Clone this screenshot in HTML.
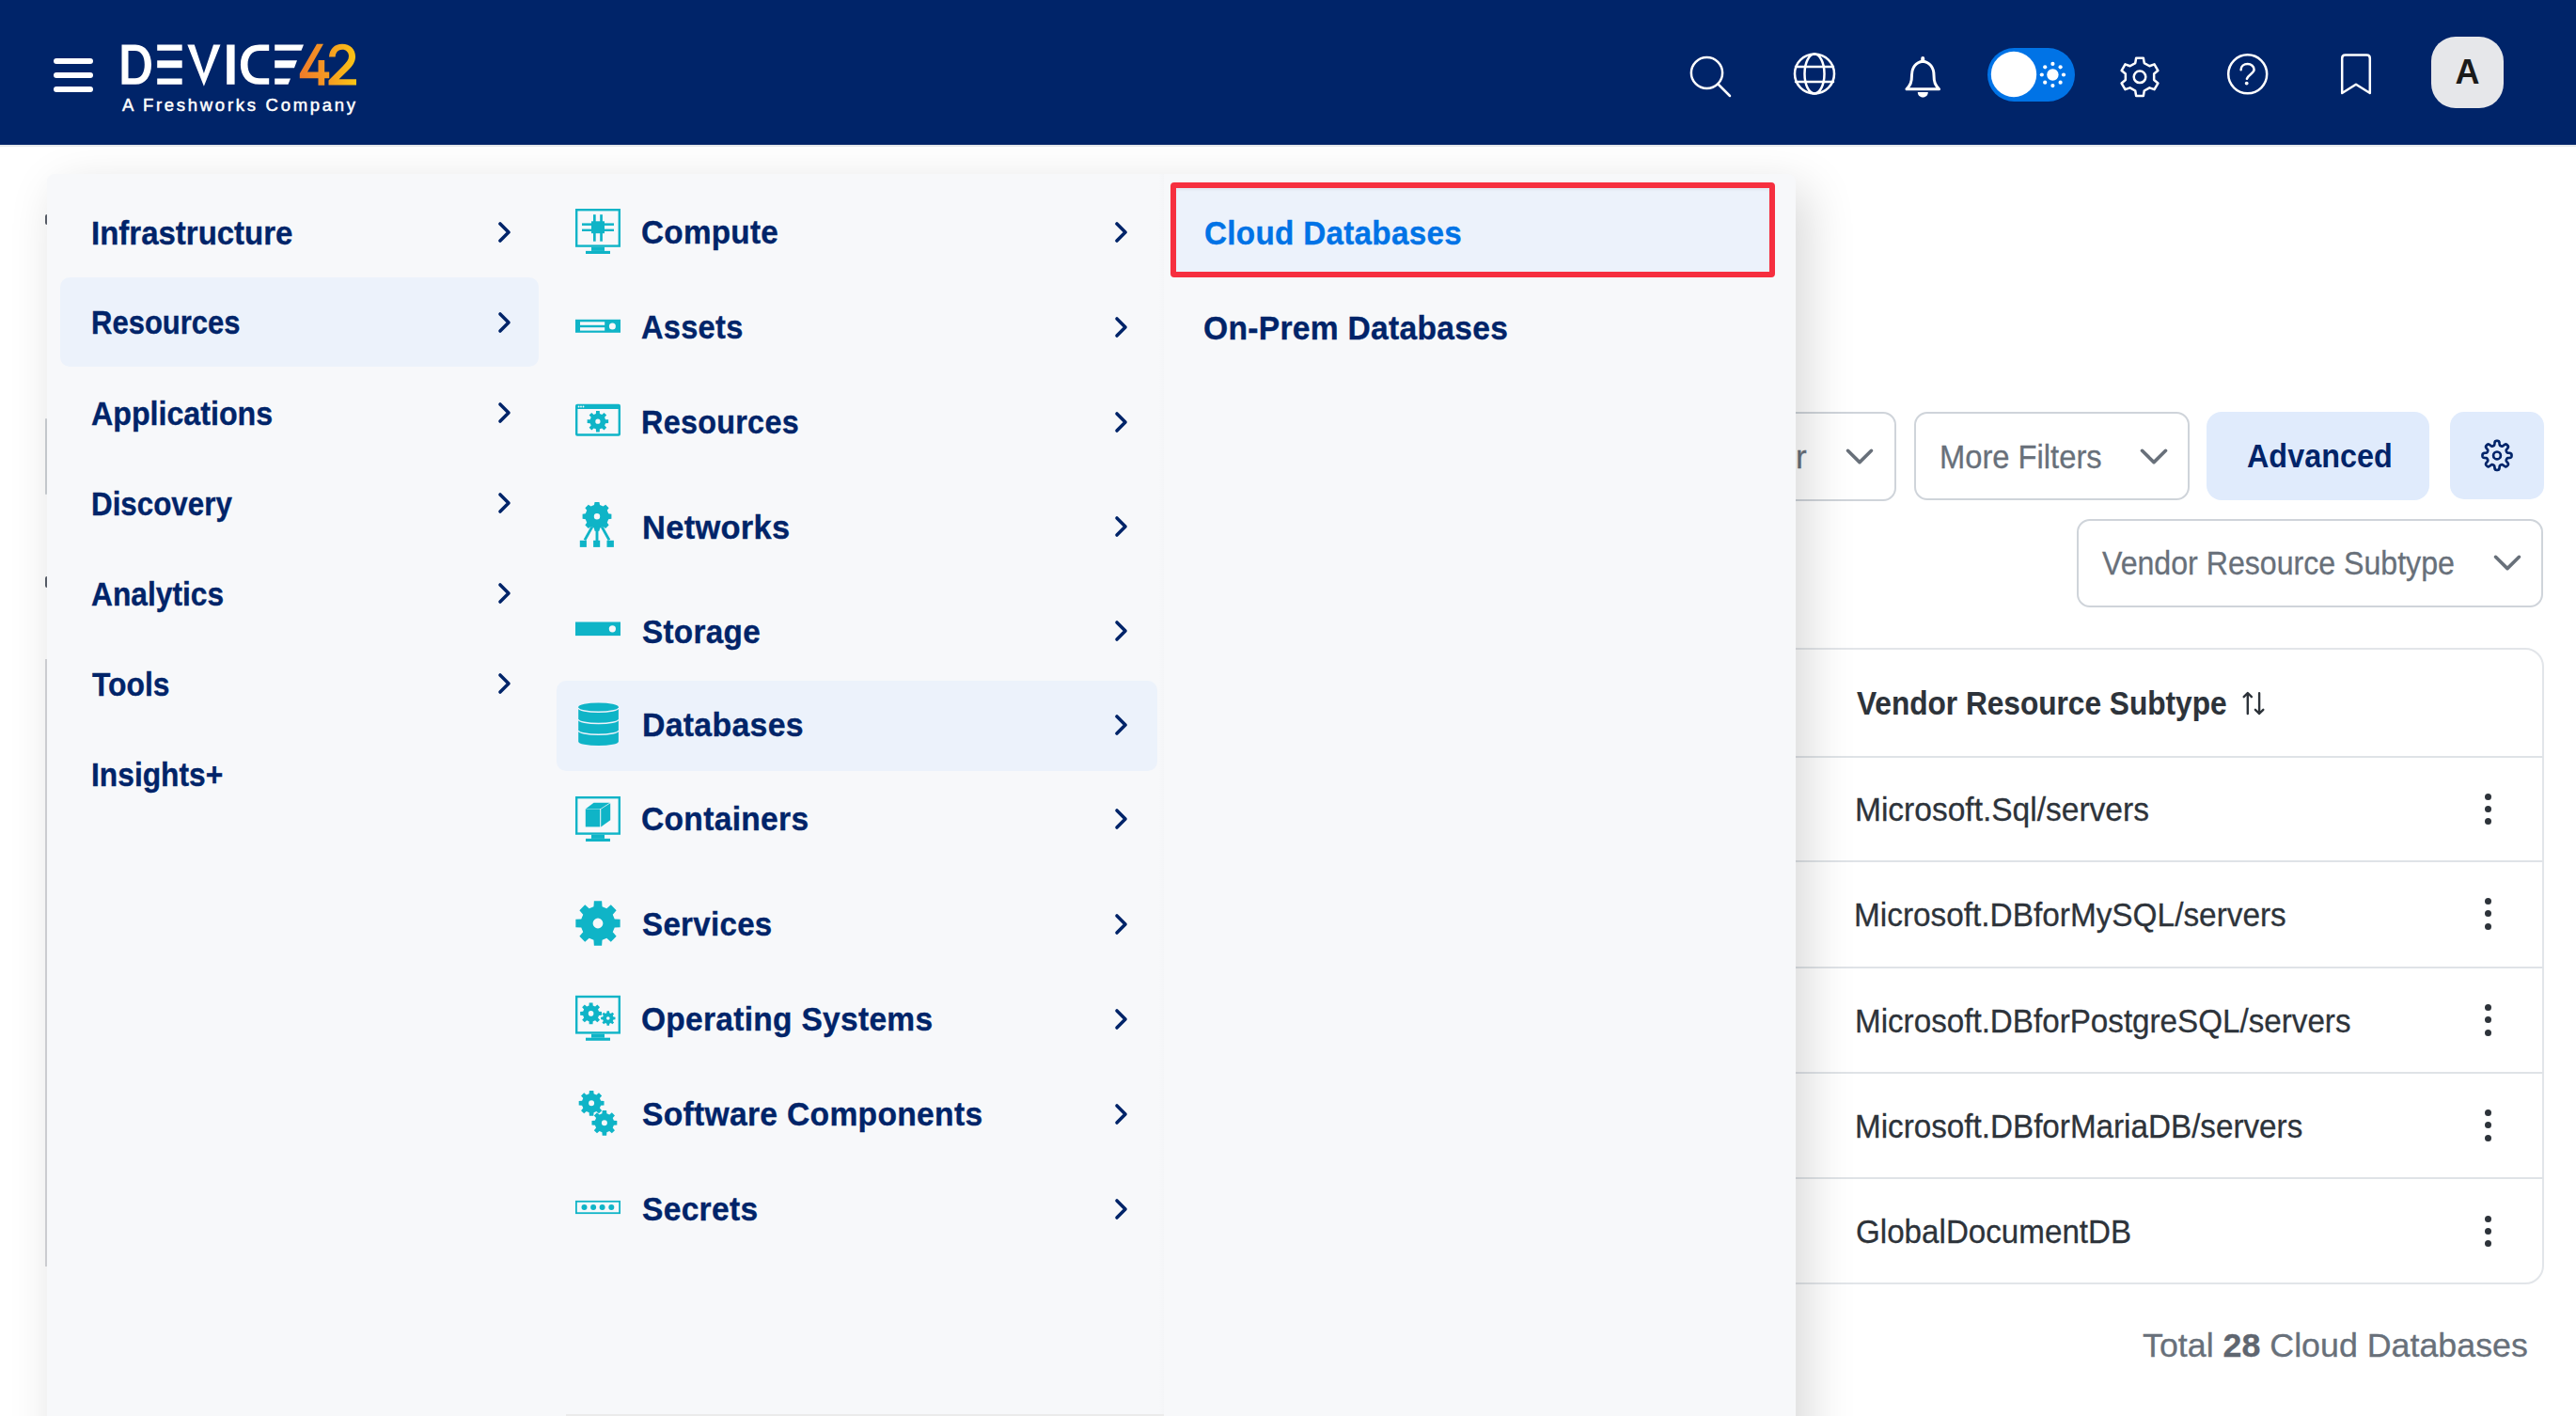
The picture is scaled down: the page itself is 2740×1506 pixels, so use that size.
<!DOCTYPE html>
<html><head><meta charset="utf-8">
<style>
*{box-sizing:border-box;margin:0;padding:0}
html,body{width:2740px;height:1506px;overflow:hidden;background:#fff;font-family:"Liberation Sans",sans-serif}
body{position:relative}
.abs{position:absolute}
.ico{position:absolute;overflow:visible}
#hdr{position:absolute;left:0;top:0;width:2740px;height:154px;background:#002469}
#hdrline{position:absolute;left:0;top:154px;width:2740px;height:2px;background:#e4e7eb}
.dd{position:absolute;border:2px solid #cfd4da;border-radius:14px;background:#fff;color:#68707a;font-size:32px}
.dd .t{position:absolute;white-space:nowrap}
.btn{position:absolute;background:#e0ebfc;border-radius:16px}
#tbl{position:absolute;left:1700px;top:689px;width:1006px;height:677px;border:2px solid #e2e5e9;border-radius:20px;background:#fff}
#panel{position:absolute;left:50px;top:185px;width:1860px;height:1400px;background:#f7f8fa;border-radius:8px;box-shadow:12px 16px 52px rgba(0,0,0,0.155)}
.m1{position:absolute;font-weight:bold;font-size:35px;color:#002469;white-space:nowrap;-webkit-text-stroke:0.35px #002469}
.m2{position:absolute;font-weight:bold;font-size:35px;color:#002469;white-space:nowrap;-webkit-text-stroke:0.35px currentColor}
.hl{position:absolute;background:#ecf2fb;border-radius:10px}
.rt{position:absolute;font-size:35px;white-space:nowrap;-webkit-text-stroke:0.3px currentColor}

</style></head><body>
<div id="hdr"></div><div id="hdrline"></div>
<div class="abs" style="left:57px;top:62px;width:42px;height:6px;border-radius:3px;background:#fff"></div>
<div class="abs" style="left:57px;top:77px;width:42px;height:6px;border-radius:3px;background:#fff"></div>
<div class="abs" style="left:57px;top:92px;width:42px;height:6px;border-radius:3px;background:#fff"></div>
<svg class="ico" style="left:0;top:0;width:400px;height:154px" viewBox="0 0 400 154"><path d="M129.5 47.5 H144 C155 47.5 161 57 161 68.7 C161 80.5 155 89.8 144 89.8 H129.5 Z M136.5 54 V83.3 H143.5 C150.5 83.3 153.8 77 153.8 68.7 C153.8 60.3 150.5 54 143.5 54 Z" fill="#ffffff" fill-rule="evenodd"/><rect x="167.2" y="47.5" width="26.5" height="6.3" fill="#ffffff"/><rect x="167.2" y="64.3" width="26.5" height="7.9" fill="#ffffff"/><rect x="167.2" y="83.5" width="26.5" height="6.3" fill="#ffffff"/><path d="M199.3 47.5 H206.8 L216.9 78 L227 47.5 H234.5 L216.9 91.8 Z" fill="#ffffff"/><rect x="241.2" y="47.5" width="8.4" height="42.3" fill="#ffffff"/><path d="M286.2 47.5 V54 C284 54 281 54 276 54 C268 54 263.5 60 263.5 68.7 C263.5 77.4 268 83.3 276 83.3 C281 83.3 284 83.3 286.2 83.3 V89.8 C284 89.8 281 89.8 276 89.8 C263 89.8 255.9 81 255.9 68.7 C255.9 56.3 263 47.5 276 47.5 C281 47.5 284 47.5 286.2 47.5 Z" fill="#ffffff"/><path d="M292.2 47.5 H323 L320.5 53.8 H292.2 Z M292.2 64.3 H316 L313 72.2 H292.2 Z M292.2 83.5 H309 L306.5 89.8 H292.2 Z" fill="#ffffff"/><defs><linearGradient id="g42" x1="318" y1="0" x2="379" y2="0" gradientUnits="userSpaceOnUse"><stop offset="0" stop-color="#f07a2a"/><stop offset="0.5" stop-color="#f59a22"/><stop offset="1" stop-color="#fbc514"/></linearGradient></defs><path d="M337 46.8 H344 L327 76.4 H338.5 V64 H345.2 V76.4 H350.2 V83.3 H345.2 V90.8 H338.5 V83.3 H318.8 V78.2 Z" fill="url(#g42)"/><path d="M350 60.5 C350.5 52 356 46.8 364 46.8 C372.5 46.8 378 52.3 378 60 C378 66 375 70 370 75 L360.5 84.2 H379 V90.4 H349.5 V85.5 L364.5 70.5 C368.5 66.5 371 63.5 371 59.8 C371 55.5 368 52.8 364 52.8 C359.8 52.8 357 55.8 356.7 60.5 Z" fill="url(#g42)"/></svg>
<div id="t_fw" class="abs" style="left:130px;top:98.5px;font-size:18.5px;font-weight:normal;-webkit-text-stroke:0.5px #fff;letter-spacing:2.72px;color:#fff;line-height:26px;white-space:nowrap">A Freshworks Company</div>
<svg class="ico" style="left:0;top:0;width:2740px;height:154px" viewBox="0 0 2740 154"><circle cx="1815.5" cy="77.5" r="16.6" fill="none" stroke="#fff" stroke-width="2.5" stroke-linecap="round" stroke-linejoin="round"/><path d="M1827.5 89.5 L1840 102" fill="none" stroke="#fff" stroke-width="2.5" stroke-linecap="round" stroke-linejoin="round"/><circle cx="1930" cy="78.5" r="21" fill="none" stroke="#fff" stroke-width="2.5" stroke-linecap="round" stroke-linejoin="round"/><ellipse cx="1930" cy="78.5" rx="10.5" ry="21" fill="none" stroke="#fff" stroke-width="2.5" stroke-linecap="round" stroke-linejoin="round"/><path d="M1910 71 H1950 M1910 87 H1950" fill="none" stroke="#fff" stroke-width="2.5" stroke-linecap="round" stroke-linejoin="round"/><path d="M2045.2 65.2 C2037.8 66 2033.5 72 2033.5 80 C2033.5 87.5 2032 90.5 2028 94.8 H2062.5 C2058.5 90.5 2057 87.5 2057 80 C2057 72 2052.7 66 2045.2 65.2 Z" fill="none" stroke="#fff" stroke-width="3" stroke-linejoin="round"/><rect x="2043.2" y="60" width="4" height="6" rx="2" fill="#fff"/><path d="M2039.8 98 H2050.8 C2050.8 101.2 2048.5 103.5 2045.3 103.5 C2042.1 103.5 2039.8 101.2 2039.8 98 Z" fill="#fff"/><rect x="2114" y="51" width="93" height="57" rx="28.5" fill="#0073e6"/><circle cx="2142" cy="79" r="24.2" fill="#fff"/><circle cx="2183.4" cy="79.5" r="6.2" fill="#fff"/><circle cx="2195.00" cy="79.50" r="2.1" fill="#fff"/><circle cx="2191.60" cy="87.70" r="2.1" fill="#fff"/><circle cx="2183.40" cy="91.10" r="2.1" fill="#fff"/><circle cx="2175.20" cy="87.70" r="2.1" fill="#fff"/><circle cx="2171.80" cy="79.50" r="2.1" fill="#fff"/><circle cx="2175.20" cy="71.30" r="2.1" fill="#fff"/><circle cx="2183.40" cy="67.90" r="2.1" fill="#fff"/><circle cx="2191.60" cy="71.30" r="2.1" fill="#fff"/><path d="M2271.21 67.06 L2272.16 61.66 L2279.84 61.66 L2280.79 67.06 L2286.37 70.28 L2291.52 68.40 L2295.36 75.06 L2291.16 78.58 L2291.16 85.02 L2295.36 88.54 L2291.52 95.20 L2286.37 93.32 L2280.79 96.54 L2279.84 101.94 L2272.16 101.94 L2271.21 96.54 L2265.63 93.32 L2260.48 95.20 L2256.64 88.54 L2260.84 85.02 L2260.84 78.58 L2256.64 75.06 L2260.48 68.40 L2265.63 70.28 Z" fill="none" stroke="#fff" stroke-width="2.5" stroke-linecap="round" stroke-linejoin="round"/><circle cx="2276" cy="81.8" r="6.3" fill="none" stroke="#fff" stroke-width="2.5" stroke-linecap="round" stroke-linejoin="round"/><circle cx="2390.7" cy="78.8" r="20.5" fill="none" stroke="#fff" stroke-width="2.5" stroke-linecap="round" stroke-linejoin="round"/><path d="M2383.6 74.2 C2383.6 70.3 2386.8 68 2390.6 68 C2394.5 68 2397.6 70.6 2397.6 74 C2397.6 78 2391.2 79.4 2389.9 83.8" fill="none" stroke="#fff" stroke-width="2.5" stroke-linecap="round" stroke-linejoin="round"/><circle cx="2389.7" cy="88.6" r="1.9" fill="#fff"/><path d="M2491.2 62 Q2491.2 58.6 2494.6 58.6 H2517.4 Q2520.8 58.6 2520.8 62 V99 L2506 89.8 L2491.2 99 Z" fill="none" stroke="#fff" stroke-width="2.5" stroke-linecap="round" stroke-linejoin="round"/></svg>
<div class="abs" style="left:2586px;top:39px;width:77px;height:76px;border-radius:26px;background:#e6e7ea"></div>
<div class="abs" style="left:2586px;top:39px;width:77px;height:76px;text-align:center;line-height:76px;font-size:36px;font-weight:bold;color:#1b1b1b;letter-spacing:0">A</div>
<div class="abs" style="left:48px;top:445px;width:2px;height:81px;background:#cdd1d6;border-radius:1px"></div>
<div class="abs" style="left:47.5px;top:613px;width:2.5px;height:12px;border-radius:2px 0 0 2px;background:#5a606a"></div>
<div class="abs" style="left:48px;top:701px;width:2px;height:646px;background:#d5d7db"></div>
<div class="abs" style="left:47.5px;top:228px;width:2.5px;height:11px;border-radius:2px 0 0 2px;background:#5a606a"></div>
<div class="dd" style="left:1700px;top:438px;width:317px;height:95px"></div>
<div id="t_r_r" class="rt" style="left:1910.00px;top:466.17px;line-height:40px;letter-spacing:0.000px;transform:scaleX(1.0000);transform-origin:0 0;color:#68707a">r</div>
<svg class="ico" style="left:1960px;top:472px;width:36px;height:28px" viewBox="0 0 36 28"><path d="M5.5 7.3 L18 19.6 L30.5 7.3" fill="none" stroke="#68707a" stroke-width="3.6" stroke-linecap="round" stroke-linejoin="round"/></svg>
<div class="dd" style="left:2035.5px;top:438px;width:293px;height:93.5px"></div>
<div id="t_r_mf" class="rt" style="left:2062.89px;top:466.07px;line-height:40px;letter-spacing:0.000px;transform:scaleX(0.9344);transform-origin:0 0;color:#68707a">More Filters</div>
<svg class="ico" style="left:2273px;top:472px;width:36px;height:28px" viewBox="0 0 36 28"><path d="M5.5 7.3 L18 19.6 L30.5 7.3" fill="none" stroke="#68707a" stroke-width="3.6" stroke-linecap="round" stroke-linejoin="round"/></svg>
<div class="btn" style="left:2347px;top:438px;width:237px;height:94px"></div>
<div id="t_r_adv" class="rt" style="left:2390.26px;top:465.20px;line-height:40px;letter-spacing:0.000px;transform:scaleX(0.9246);transform-origin:0 0;font-weight:bold;color:#002469;-webkit-text-stroke:0">Advanced</div>
<div class="btn" style="left:2606px;top:438px;width:100px;height:93px;border-radius:15px"></div>
<svg class="ico" style="left:2600px;top:430px;width:110px;height:110px" viewBox="2600 430 110 110"><path d="M2671.50 484.40 L2671.49 484.81 L2671.45 485.21 L2671.38 485.61 L2671.24 486.00 L2670.96 486.37 L2670.41 486.68 L2669.50 486.90 L2668.39 487.03 L2667.48 487.16 L2666.93 487.33 L2666.62 487.55 L2666.44 487.79 L2666.30 488.05 L2666.18 488.31 L2666.07 488.57 L2665.96 488.84 L2665.86 489.10 L2665.78 489.38 L2665.74 489.69 L2665.80 490.06 L2666.07 490.57 L2666.62 491.30 L2667.32 492.18 L2667.81 492.98 L2667.97 493.58 L2667.91 494.04 L2667.73 494.42 L2667.50 494.75 L2667.24 495.07 L2666.96 495.36 L2666.67 495.64 L2666.35 495.90 L2666.02 496.13 L2665.64 496.31 L2665.18 496.37 L2664.58 496.21 L2663.78 495.72 L2662.90 495.02 L2662.17 494.47 L2661.66 494.20 L2661.29 494.14 L2660.98 494.18 L2660.70 494.26 L2660.44 494.36 L2660.17 494.47 L2659.91 494.58 L2659.65 494.70 L2659.39 494.84 L2659.15 495.02 L2658.93 495.33 L2658.76 495.88 L2658.63 496.79 L2658.50 497.90 L2658.28 498.81 L2657.97 499.36 L2657.60 499.64 L2657.21 499.78 L2656.81 499.85 L2656.41 499.89 L2656.00 499.90 L2655.59 499.89 L2655.19 499.85 L2654.79 499.78 L2654.40 499.64 L2654.03 499.36 L2653.72 498.81 L2653.50 497.90 L2653.37 496.79 L2653.24 495.88 L2653.07 495.33 L2652.85 495.02 L2652.61 494.84 L2652.35 494.70 L2652.09 494.58 L2651.83 494.47 L2651.56 494.36 L2651.30 494.26 L2651.02 494.18 L2650.71 494.14 L2650.34 494.20 L2649.83 494.47 L2649.10 495.02 L2648.22 495.72 L2647.42 496.21 L2646.82 496.37 L2646.36 496.31 L2645.98 496.13 L2645.65 495.90 L2645.33 495.64 L2645.04 495.36 L2644.76 495.07 L2644.50 494.75 L2644.27 494.42 L2644.09 494.04 L2644.03 493.58 L2644.19 492.98 L2644.68 492.18 L2645.38 491.30 L2645.93 490.57 L2646.20 490.06 L2646.26 489.69 L2646.22 489.38 L2646.14 489.10 L2646.04 488.84 L2645.93 488.57 L2645.82 488.31 L2645.70 488.05 L2645.56 487.79 L2645.38 487.55 L2645.07 487.33 L2644.52 487.16 L2643.61 487.03 L2642.50 486.90 L2641.59 486.68 L2641.04 486.37 L2640.76 486.00 L2640.62 485.61 L2640.55 485.21 L2640.51 484.81 L2640.50 484.40 L2640.51 483.99 L2640.55 483.59 L2640.62 483.19 L2640.76 482.80 L2641.04 482.43 L2641.59 482.12 L2642.50 481.90 L2643.61 481.77 L2644.52 481.64 L2645.07 481.47 L2645.38 481.25 L2645.56 481.01 L2645.70 480.75 L2645.82 480.49 L2645.93 480.23 L2646.04 479.96 L2646.14 479.70 L2646.22 479.42 L2646.26 479.11 L2646.20 478.74 L2645.93 478.23 L2645.38 477.50 L2644.68 476.62 L2644.19 475.82 L2644.03 475.22 L2644.09 474.76 L2644.27 474.38 L2644.50 474.05 L2644.76 473.73 L2645.04 473.44 L2645.33 473.16 L2645.65 472.90 L2645.98 472.67 L2646.36 472.49 L2646.82 472.43 L2647.42 472.59 L2648.22 473.08 L2649.10 473.78 L2649.83 474.33 L2650.34 474.60 L2650.71 474.66 L2651.02 474.62 L2651.30 474.54 L2651.56 474.44 L2651.83 474.33 L2652.09 474.22 L2652.35 474.10 L2652.61 473.96 L2652.85 473.78 L2653.07 473.47 L2653.24 472.92 L2653.37 472.01 L2653.50 470.90 L2653.72 469.99 L2654.03 469.44 L2654.40 469.16 L2654.79 469.02 L2655.19 468.95 L2655.59 468.91 L2656.00 468.90 L2656.41 468.91 L2656.81 468.95 L2657.21 469.02 L2657.60 469.16 L2657.97 469.44 L2658.28 469.99 L2658.50 470.90 L2658.63 472.01 L2658.76 472.92 L2658.93 473.47 L2659.15 473.78 L2659.39 473.96 L2659.65 474.10 L2659.91 474.22 L2660.17 474.33 L2660.44 474.44 L2660.70 474.54 L2660.98 474.62 L2661.29 474.66 L2661.66 474.60 L2662.17 474.33 L2662.90 473.78 L2663.78 473.08 L2664.58 472.59 L2665.18 472.43 L2665.64 472.49 L2666.02 472.67 L2666.35 472.90 L2666.67 473.16 L2666.96 473.44 L2667.24 473.73 L2667.50 474.05 L2667.73 474.38 L2667.91 474.76 L2667.97 475.22 L2667.81 475.82 L2667.32 476.62 L2666.62 477.50 L2666.07 478.23 L2665.80 478.74 L2665.74 479.11 L2665.78 479.42 L2665.86 479.70 L2665.96 479.96 L2666.07 480.23 L2666.18 480.49 L2666.30 480.75 L2666.44 481.01 L2666.62 481.25 L2666.93 481.47 L2667.48 481.64 L2668.39 481.77 L2669.50 481.90 L2670.41 482.12 L2670.96 482.43 L2671.24 482.80 L2671.38 483.19 L2671.45 483.59 L2671.49 483.99 Z" fill="none" stroke="#002469" stroke-width="2.7" stroke-linejoin="round"/><circle cx="2656" cy="484.4" r="3.9" fill="none" stroke="#002469" stroke-width="2.7"/></svg>
<div class="dd" style="left:2208.5px;top:551.5px;width:496px;height:94px"></div>
<div id="t_r_vrs" class="rt" style="left:2236.25px;top:579.31px;line-height:40px;letter-spacing:0.000px;transform:scaleX(0.9175);transform-origin:0 0;color:#68707a">Vendor Resource Subtype</div>
<svg class="ico" style="left:2649px;top:585px;width:36px;height:28px" viewBox="0 0 36 28"><path d="M5.5 7.3 L18 19.6 L30.5 7.3" fill="none" stroke="#68707a" stroke-width="3.6" stroke-linecap="round" stroke-linejoin="round"/></svg>
<div id="tbl"></div>
<div class="abs" style="left:1700px;top:804px;width:1005px;height:2px;background:#dfe3e7"></div>
<div class="abs" style="left:1700px;top:915px;width:1005px;height:2px;background:#dfe3e7"></div>
<div class="abs" style="left:1700px;top:1027.5px;width:1005px;height:2px;background:#dfe3e7"></div>
<div class="abs" style="left:1700px;top:1140px;width:1005px;height:2px;background:#dfe3e7"></div>
<div class="abs" style="left:1700px;top:1252px;width:1005px;height:2px;background:#dfe3e7"></div>
<div id="t_r_hdr" class="rt" style="left:1974.74px;top:728.06px;line-height:40px;letter-spacing:0.000px;transform:scaleX(0.9033);transform-origin:0 0;font-weight:bold;color:#2d333a;-webkit-text-stroke:0.15px #2d333a">Vendor Resource Subtype</div>
<svg class="ico" style="left:2370px;top:720px;width:50px;height:55px" viewBox="2370 720 50 55"><path d="M2390.8 759 V737.2 M2386.7 741.2 L2390.8 737 L2394.9 741.2 M2403.1 737.2 V759 M2398.9 754.8 L2403.1 759 L2407.3 754.8" fill="none" stroke="#2d333a" stroke-width="2.4" stroke-linecap="round" stroke-linejoin="round"/></svg>
<div id="t_r_c0" class="rt" style="left:1973.42px;top:841.06px;line-height:40px;letter-spacing:0.000px;transform:scaleX(0.9576);transform-origin:0 0;color:#2d333a">Microsoft.Sql/servers</div>
<div class="abs" style="left:2643.3px;top:843.5px;width:7px;height:7px;border-radius:50%;background:#2d333a"></div>
<div class="abs" style="left:2643.3px;top:856.9px;width:7px;height:7px;border-radius:50%;background:#2d333a"></div>
<div class="abs" style="left:2643.3px;top:870.3px;width:7px;height:7px;border-radius:50%;background:#2d333a"></div>
<div id="t_r_c1" class="rt" style="left:1972.48px;top:952.56px;line-height:40px;letter-spacing:0.000px;transform:scaleX(0.9533);transform-origin:0 0;color:#2d333a">Microsoft.DBforMySQL/servers</div>
<div class="abs" style="left:2643.3px;top:955px;width:7px;height:7px;border-radius:50%;background:#2d333a"></div>
<div class="abs" style="left:2643.3px;top:968.4px;width:7px;height:7px;border-radius:50%;background:#2d333a"></div>
<div class="abs" style="left:2643.3px;top:981.8px;width:7px;height:7px;border-radius:50%;background:#2d333a"></div>
<div id="t_r_c2" class="rt" style="left:1972.58px;top:1065.56px;line-height:40px;letter-spacing:0.000px;transform:scaleX(0.9483);transform-origin:0 0;color:#2d333a">Microsoft.DBforPostgreSQL/servers</div>
<div class="abs" style="left:2643.3px;top:1068px;width:7px;height:7px;border-radius:50%;background:#2d333a"></div>
<div class="abs" style="left:2643.3px;top:1081.4px;width:7px;height:7px;border-radius:50%;background:#2d333a"></div>
<div class="abs" style="left:2643.3px;top:1094.8px;width:7px;height:7px;border-radius:50%;background:#2d333a"></div>
<div id="t_r_c3" class="rt" style="left:1972.58px;top:1177.74px;line-height:40px;letter-spacing:0.000px;transform:scaleX(0.9492);transform-origin:0 0;color:#2d333a">Microsoft.DBforMariaDB/servers</div>
<div class="abs" style="left:2643.3px;top:1180px;width:7px;height:7px;border-radius:50%;background:#2d333a"></div>
<div class="abs" style="left:2643.3px;top:1193.4px;width:7px;height:7px;border-radius:50%;background:#2d333a"></div>
<div class="abs" style="left:2643.3px;top:1206.8px;width:7px;height:7px;border-radius:50%;background:#2d333a"></div>
<div id="t_r_c4" class="rt" style="left:1974.46px;top:1290.24px;line-height:40px;letter-spacing:0.000px;transform:scaleX(0.9477);transform-origin:0 0;color:#2d333a">GlobalDocumentDB</div>
<div class="abs" style="left:2643.3px;top:1292.5px;width:7px;height:7px;border-radius:50%;background:#2d333a"></div>
<div class="abs" style="left:2643.3px;top:1305.9px;width:7px;height:7px;border-radius:50%;background:#2d333a"></div>
<div class="abs" style="left:2643.3px;top:1319.3px;width:7px;height:7px;border-radius:50%;background:#2d333a"></div>
<div id="t_r_tot" class="rt" style="left:2279.01px;top:1410.58px;line-height:40px;letter-spacing:0.000px;transform:scaleX(1.0225);transform-origin:0 0;color:#68707a">Total <b style="color:#5f6670">28</b> Cloud Databases</div>
<div id="panel"></div>
<div class="abs" style="left:1232px;top:185px;width:6px;height:1321px;background:linear-gradient(90deg,rgba(0,0,0,0),rgba(0,0,0,0.012))"></div>
<div class="abs" style="left:602px;top:1504px;width:636px;height:2px;background:#ebebeb"></div>
<div class="hl" style="left:64px;top:295px;width:509px;height:95px"></div>
<div class="hl" style="left:592px;top:724px;width:639px;height:96px"></div>
<div id="t_c1_0" class="m1" style="left:96.60px;top:228.19px;line-height:40px;letter-spacing:0.000px;transform:scaleX(0.9423);transform-origin:0 0;">Infrastructure</div>
<svg class="ico" style="left:528px;top:233.5px;width:20px;height:30px" viewBox="0 0 20 30"><path d="M4 4 L13 13 L4 22" fill="none" stroke="#002469" stroke-width="3.6" stroke-linecap="round" stroke-linejoin="round"/></svg>
<div id="t_c1_1" class="m1" style="left:97.27px;top:323.18px;line-height:40px;letter-spacing:0.000px;transform:scaleX(0.8862);transform-origin:0 0;">Resources</div>
<svg class="ico" style="left:528px;top:329.5px;width:20px;height:30px" viewBox="0 0 20 30"><path d="M4 4 L13 13 L4 22" fill="none" stroke="#002469" stroke-width="3.6" stroke-linecap="round" stroke-linejoin="round"/></svg>
<div id="t_c1_2" class="m1" style="left:97.16px;top:419.85px;line-height:40px;letter-spacing:0.000px;transform:scaleX(0.9197);transform-origin:0 0;">Applications</div>
<svg class="ico" style="left:528px;top:425.5px;width:20px;height:30px" viewBox="0 0 20 30"><path d="M4 4 L13 13 L4 22" fill="none" stroke="#002469" stroke-width="3.6" stroke-linecap="round" stroke-linejoin="round"/></svg>
<div id="t_c1_3" class="m1" style="left:97.15px;top:515.85px;line-height:40px;letter-spacing:0.000px;transform:scaleX(0.8957);transform-origin:0 0;">Discovery</div>
<svg class="ico" style="left:528px;top:521.5px;width:20px;height:30px" viewBox="0 0 20 30"><path d="M4 4 L13 13 L4 22" fill="none" stroke="#002469" stroke-width="3.6" stroke-linecap="round" stroke-linejoin="round"/></svg>
<div id="t_c1_4" class="m1" style="left:97.21px;top:611.85px;line-height:40px;letter-spacing:0.000px;transform:scaleX(0.9067);transform-origin:0 0;">Analytics</div>
<svg class="ico" style="left:528px;top:617.5px;width:20px;height:30px" viewBox="0 0 20 30"><path d="M4 4 L13 13 L4 22" fill="none" stroke="#002469" stroke-width="3.6" stroke-linecap="round" stroke-linejoin="round"/></svg>
<div id="t_c1_5" class="m1" style="left:98.20px;top:708.19px;line-height:40px;letter-spacing:0.000px;transform:scaleX(0.9097);transform-origin:0 0;">Tools</div>
<svg class="ico" style="left:528px;top:713.5px;width:20px;height:30px" viewBox="0 0 20 30"><path d="M4 4 L13 13 L4 22" fill="none" stroke="#002469" stroke-width="3.6" stroke-linecap="round" stroke-linejoin="round"/></svg>
<div id="t_c1_6" class="m1" style="left:96.87px;top:803.85px;line-height:40px;letter-spacing:0.000px;transform:scaleX(0.9075);transform-origin:0 0;">Insights+</div>
<div id="t_c2_Compute" class="m2" style="left:682.35px;top:227.48px;line-height:40px;letter-spacing:0.300px;transform:scaleX(0.9499);transform-origin:0 0;">Compute</div>
<svg class="ico" style="left:1183.5px;top:234px;width:20px;height:30px" viewBox="0 0 20 30"><path d="M4 4 L13 13 L4 22" fill="none" stroke="#002469" stroke-width="3.6" stroke-linecap="round" stroke-linejoin="round"/></svg>
<div id="t_c2_Assets" class="m2" style="left:682.01px;top:328.19px;line-height:40px;letter-spacing:0.300px;transform:scaleX(0.9310);transform-origin:0 0;">Assets</div>
<svg class="ico" style="left:1183.5px;top:334.5px;width:20px;height:30px" viewBox="0 0 20 30"><path d="M4 4 L13 13 L4 22" fill="none" stroke="#002469" stroke-width="3.6" stroke-linecap="round" stroke-linejoin="round"/></svg>
<div id="t_c2_Resources" class="m2" style="left:682.25px;top:429.19px;line-height:40px;letter-spacing:0.300px;transform:scaleX(0.9243);transform-origin:0 0;">Resources</div>
<svg class="ico" style="left:1183.5px;top:435.5px;width:20px;height:30px" viewBox="0 0 20 30"><path d="M4 4 L13 13 L4 22" fill="none" stroke="#002469" stroke-width="3.6" stroke-linecap="round" stroke-linejoin="round"/></svg>
<div id="t_c2_Networks" class="m2" style="left:682.77px;top:540.69px;line-height:40px;letter-spacing:0.300px;transform:scaleX(0.9844);transform-origin:0 0;">Networks</div>
<svg class="ico" style="left:1183.5px;top:547px;width:20px;height:30px" viewBox="0 0 20 30"><path d="M4 4 L13 13 L4 22" fill="none" stroke="#002469" stroke-width="3.6" stroke-linecap="round" stroke-linejoin="round"/></svg>
<div id="t_c2_Storage" class="m2" style="left:682.97px;top:651.73px;line-height:40px;letter-spacing:0.300px;transform:scaleX(0.9510);transform-origin:0 0;">Storage</div>
<svg class="ico" style="left:1183.5px;top:658.25px;width:20px;height:30px" viewBox="0 0 20 30"><path d="M4 4 L13 13 L4 22" fill="none" stroke="#002469" stroke-width="3.6" stroke-linecap="round" stroke-linejoin="round"/></svg>
<div id="t_c2_Databases" class="m2" style="left:682.91px;top:751.43px;line-height:40px;letter-spacing:0.300px;transform:scaleX(0.9664);transform-origin:0 0;">Databases</div>
<svg class="ico" style="left:1183.5px;top:758.25px;width:20px;height:30px" viewBox="0 0 20 30"><path d="M4 4 L13 13 L4 22" fill="none" stroke="#002469" stroke-width="3.6" stroke-linecap="round" stroke-linejoin="round"/></svg>
<div id="t_c2_Containers" class="m2" style="left:682.27px;top:851.44px;line-height:40px;letter-spacing:0.300px;transform:scaleX(0.9602);transform-origin:0 0;">Containers</div>
<svg class="ico" style="left:1183.5px;top:858.25px;width:20px;height:30px" viewBox="0 0 20 30"><path d="M4 4 L13 13 L4 22" fill="none" stroke="#002469" stroke-width="3.6" stroke-linecap="round" stroke-linejoin="round"/></svg>
<div id="t_c2_Services" class="m2" style="left:683.01px;top:963.19px;line-height:40px;letter-spacing:0.300px;transform:scaleX(0.9464);transform-origin:0 0;">Services</div>
<svg class="ico" style="left:1183.5px;top:969.5px;width:20px;height:30px" viewBox="0 0 20 30"><path d="M4 4 L13 13 L4 22" fill="none" stroke="#002469" stroke-width="3.6" stroke-linecap="round" stroke-linejoin="round"/></svg>
<div id="t_c2_Operating" class="m2" style="left:682.27px;top:1064.23px;line-height:40px;letter-spacing:0.300px;transform:scaleX(0.9576);transform-origin:0 0;">Operating Systems</div>
<svg class="ico" style="left:1183.5px;top:1070.75px;width:20px;height:30px" viewBox="0 0 20 30"><path d="M4 4 L13 13 L4 22" fill="none" stroke="#002469" stroke-width="3.6" stroke-linecap="round" stroke-linejoin="round"/></svg>
<div id="t_c2_Software" class="m2" style="left:682.96px;top:1165.48px;line-height:40px;letter-spacing:0.300px;transform:scaleX(0.9609);transform-origin:0 0;">Software Components</div>
<svg class="ico" style="left:1183.5px;top:1172px;width:20px;height:30px" viewBox="0 0 20 30"><path d="M4 4 L13 13 L4 22" fill="none" stroke="#002469" stroke-width="3.6" stroke-linecap="round" stroke-linejoin="round"/></svg>
<div id="t_c2_Secrets" class="m2" style="left:682.96px;top:1265.94px;line-height:40px;letter-spacing:0.300px;transform:scaleX(0.9592);transform-origin:0 0;">Secrets</div>
<svg class="ico" style="left:1183.5px;top:1272.75px;width:20px;height:30px" viewBox="0 0 20 30"><path d="M4 4 L13 13 L4 22" fill="none" stroke="#002469" stroke-width="3.6" stroke-linecap="round" stroke-linejoin="round"/></svg>
<svg class="ico" style="left:0;top:0;width:1300px;height:1506px" viewBox="0 0 1300 1506"><g transform="translate(612 222)"><rect x="1.2" y="1.2" width="45.6" height="38.4" fill="none" stroke="#0fb4c7" stroke-width="2.4"/><rect x="17" y="40.8" width="14" height="4.1" fill="#0fb4c7"/><rect x="11" y="44.9" width="26" height="3.1" fill="#0fb4c7"/><rect x="17" y="13.3" width="14" height="12.9" fill="#0fb4c7"/><rect x="19" y="6.2" width="2.7" height="28.5" fill="#0fb4c7"/><rect x="26.2" y="6.2" width="2.7" height="28.5" fill="#0fb4c7"/><rect x="7" y="15.4" width="34" height="2.5" fill="#0fb4c7"/><rect x="7" y="21.6" width="34" height="2.4" fill="#0fb4c7"/></g><g transform="translate(612 339.8)"><rect x="0" y="0" width="48" height="14" fill="#0fb4c7"/><rect x="5" y="2.5" width="26.2" height="3.5" fill="#f7f8fa"/><rect x="5" y="8.4" width="26.2" height="3.4" fill="#f7f8fa"/><circle cx="39.4" cy="7.1" r="3.5" fill="#f7f8fa"/></g><g transform="translate(612 429.8)"><path d="M2 0 H46 A2 2 0 0 1 48 2 V32 A2 2 0 0 1 46 34 H2 A2 2 0 0 1 0 32 V2 A2 2 0 0 1 2 0 Z M2.4 5.2 V31.5 H45.6 V5.2 Z" fill="#0fb4c7" fill-rule="evenodd"/><circle cx="3.6" cy="2.7" r="0.9" fill="#f7f8fa"/><circle cx="6" cy="2.7" r="0.9" fill="#f7f8fa"/><circle cx="8.5" cy="2.7" r="0.9" fill="#f7f8fa"/><path d="M21.87 10.25 L22.03 7.15 L25.77 7.15 L25.93 10.25 L28.23 11.20 L30.53 9.12 L33.18 11.77 L31.10 14.07 L32.05 16.37 L35.15 16.53 L35.15 20.27 L32.05 20.43 L31.10 22.73 L33.18 25.03 L30.53 27.68 L28.23 25.60 L25.93 26.55 L25.77 29.65 L22.03 29.65 L21.87 26.55 L19.57 25.60 L17.27 27.68 L14.62 25.03 L16.70 22.73 L15.75 20.43 L12.65 20.27 L12.65 16.53 L15.75 16.37 L16.70 14.07 L14.62 11.77 L17.27 9.12 L19.57 11.20 Z M21.30 18.40 a2.60 2.60 0 1 0 5.20 0 a2.60 2.60 0 1 0 -5.20 0 Z" fill="#0fb4c7" fill-rule="evenodd"/></g><g transform="translate(616.8 533.9)"><path d="M15.16 3.17 L15.76 -0.01 L20.64 -0.01 L21.24 3.17 L24.70 4.61 L27.37 2.78 L30.82 6.23 L28.99 8.90 L30.43 12.36 L33.61 12.96 L33.61 17.84 L30.43 18.44 L28.99 21.90 L30.82 24.57 L27.37 28.02 L24.70 26.19 L21.24 27.63 L20.64 30.81 L15.76 30.81 L15.16 27.63 L11.70 26.19 L9.03 28.02 L5.58 24.57 L7.41 21.90 L5.97 18.44 L2.79 17.84 L2.79 12.96 L5.97 12.36 L7.41 8.90 L5.58 6.23 L9.03 2.78 L11.70 4.61 Z M15.00 15.40 a3.20 3.20 0 1 0 6.40 0 a3.20 3.20 0 1 0 -6.40 0 Z" fill="#0fb4c7" fill-rule="evenodd"/><path d="M13 26.5 L5.2 40.5 M23.4 26.5 L31.2 40.5 M18.2 30 V41" stroke="#0fb4c7" stroke-width="2.9" fill="none"/><path d="M14.4 26.4 H22.2 L18.2 33.2 Z" fill="#0fb4c7"/><rect x="0" y="40.9" width="7.1" height="7.1" fill="#0fb4c7"/><rect x="14.3" y="40.9" width="7.1" height="7.1" fill="#0fb4c7"/><rect x="28.7" y="40.9" width="7.4" height="7.1" fill="#0fb4c7"/></g><g transform="translate(612 661.5)"><rect x="0" y="0" width="48" height="14.6" fill="#0fb4c7"/><circle cx="39.4" cy="7.3" r="3.6" fill="#f7f8fa"/></g><g transform="translate(615.2 747.6)"><path d="M0 4.3 A21.35 4.3 0 0 1 42.7 4.3 V41.1 A21.35 4.3 0 0 1 0 41.1 Z" fill="#0fb4c7"/><path d="M0 5.3 A21.35 4.3 0 0 0 42.7 5.3 M0 17.6 A21.35 4.3 0 0 0 42.7 17.6 M0 29.4 A21.35 4.3 0 0 0 42.7 29.4" fill="none" stroke="#ecf2fb" stroke-width="1.4"/></g><g transform="translate(612 847)"><rect x="1.2" y="1.2" width="45.6" height="38.4" fill="none" stroke="#0fb4c7" stroke-width="2.4"/><rect x="17" y="40.8" width="14" height="4.1" fill="#0fb4c7"/><rect x="11" y="44.9" width="26" height="3.1" fill="#0fb4c7"/><path d="M10.8 13.4 H26.2 V32.4 H10.8 Z" fill="#0fb4c7"/><path d="M11.3 12.9 L19.6 6.8 H36.7 L27 12.9 Z" fill="#0fb4c7"/><path d="M27.2 13.6 L37.2 7.3 V25.2 L27.2 32.4 Z" fill="#0fb4c7"/></g><path d="M631.45 964.27 L631.87 958.36 L640.13 958.36 L640.55 964.27 L645.32 966.25 L649.80 962.36 L655.64 968.20 L651.75 972.68 L653.73 977.45 L659.64 977.87 L659.64 986.13 L653.73 986.55 L651.75 991.32 L655.64 995.80 L649.80 1001.64 L645.32 997.75 L640.55 999.73 L640.13 1005.64 L631.87 1005.64 L631.45 999.73 L626.68 997.75 L622.20 1001.64 L616.36 995.80 L620.25 991.32 L618.27 986.55 L612.36 986.13 L612.36 977.87 L618.27 977.45 L620.25 972.68 L616.36 968.20 L622.20 962.36 L626.68 966.25 Z M630.60 982.00 a5.40 5.40 0 1 0 10.80 0 a5.40 5.40 0 1 0 -10.80 0 Z" fill="#0fb4c7" fill-rule="evenodd"/><g transform="translate(612 1058.8)"><rect x="1.2" y="1.2" width="45.6" height="38.4" fill="none" stroke="#0fb4c7" stroke-width="2.4"/><rect x="17" y="40.8" width="14" height="4.1" fill="#0fb4c7"/><rect x="11" y="44.9" width="26" height="3.1" fill="#0fb4c7"/><path d="M14.50 10.66 L14.70 7.66 L18.50 7.66 L18.70 10.66 L21.09 11.65 L23.34 9.66 L26.04 12.36 L24.05 14.61 L25.04 17.00 L28.04 17.20 L28.04 21.00 L25.04 21.20 L24.05 23.59 L26.04 25.84 L23.34 28.54 L21.09 26.55 L18.70 27.54 L18.50 30.54 L14.70 30.54 L14.50 27.54 L12.11 26.55 L9.86 28.54 L7.16 25.84 L9.15 23.59 L8.16 21.20 L5.16 21.00 L5.16 17.20 L8.16 17.00 L9.15 14.61 L7.16 12.36 L9.86 9.66 L12.11 11.65 Z M13.80 19.10 a2.80 2.80 0 1 0 5.60 0 a2.80 2.80 0 1 0 -5.60 0 Z" fill="#0fb4c7" fill-rule="evenodd"/><path d="M33.40 18.57 L33.52 16.51 L36.08 16.51 L36.20 18.57 L37.79 19.23 L39.34 17.85 L41.15 19.66 L39.77 21.21 L40.43 22.80 L42.49 22.92 L42.49 25.48 L40.43 25.60 L39.77 27.19 L41.15 28.74 L39.34 30.55 L37.79 29.17 L36.20 29.83 L36.08 31.89 L33.52 31.89 L33.40 29.83 L31.81 29.17 L30.26 30.55 L28.45 28.74 L29.83 27.19 L29.17 25.60 L27.11 25.48 L27.11 22.92 L29.17 22.80 L29.83 21.21 L28.45 19.66 L30.26 17.85 L31.81 19.23 Z M33.00 24.20 a1.80 1.80 0 1 0 3.60 0 a1.80 1.80 0 1 0 -3.60 0 Z" fill="#0fb4c7" fill-rule="evenodd"/></g><g transform="translate(612 1160)"><path d="M14.62 3.30 L14.87 -0.12 L19.33 -0.12 L19.58 3.30 L22.41 4.48 L25.01 2.23 L28.17 5.39 L25.92 7.99 L27.10 10.82 L30.52 11.07 L30.52 15.53 L27.10 15.78 L25.92 18.61 L28.17 21.21 L25.01 24.37 L22.41 22.12 L19.58 23.30 L19.33 26.72 L14.87 26.72 L14.62 23.30 L11.79 22.12 L9.19 24.37 L6.03 21.21 L8.28 18.61 L7.10 15.78 L3.68 15.53 L3.68 11.07 L7.10 10.82 L8.28 7.99 L6.03 5.39 L9.19 2.23 L11.79 4.48 Z M14.10 13.30 a3.00 3.00 0 1 0 6.00 0 a3.00 3.00 0 1 0 -6.00 0 Z" fill="#0fb4c7" fill-rule="evenodd"/><path d="M28.42 24.30 L28.67 20.88 L33.13 20.88 L33.38 24.30 L36.21 25.48 L38.81 23.23 L41.97 26.39 L39.72 28.99 L40.90 31.82 L44.32 32.07 L44.32 36.53 L40.90 36.78 L39.72 39.61 L41.97 42.21 L38.81 45.37 L36.21 43.12 L33.38 44.30 L33.13 47.72 L28.67 47.72 L28.42 44.30 L25.59 43.12 L22.99 45.37 L19.83 42.21 L22.08 39.61 L20.90 36.78 L17.48 36.53 L17.48 32.07 L20.90 31.82 L22.08 28.99 L19.83 26.39 L22.99 23.23 L25.59 25.48 Z M27.90 34.30 a3.00 3.00 0 1 0 6.00 0 a3.00 3.00 0 1 0 -6.00 0 Z" fill="#0fb4c7" fill-rule="evenodd"/></g><g transform="translate(612 1276.9)"><rect x="0.9" y="0.9" width="46.2" height="12.4" fill="none" stroke="#0fb4c7" stroke-width="1.8"/><circle cx="9.5" cy="7.1" r="3" fill="#0fb4c7"/><circle cx="19.1" cy="7.1" r="3" fill="#0fb4c7"/><circle cx="28.6" cy="7.1" r="3" fill="#0fb4c7"/><circle cx="38.3" cy="7.1" r="3" fill="#0fb4c7"/></g></svg>
<div class="abs" style="left:1244.5px;top:194px;width:643px;height:101px;background:#ecf2fb;border:6px solid #f62f3f;border-radius:4px;box-shadow:inset 0 2px 3px rgba(0,0,0,0.05)"></div>
<div id="t_c3_0" class="m2" style="left:1280.74px;top:228.14px;line-height:40px;letter-spacing:0.300px;transform:scaleX(0.9501);transform-origin:0 0;color:#0073e6">Cloud Databases</div>
<div id="t_c3_1" class="m2" style="left:1280.27px;top:328.69px;line-height:40px;letter-spacing:0.300px;transform:scaleX(0.9596);transform-origin:0 0;">On-Prem Databases</div>
</body></html>
